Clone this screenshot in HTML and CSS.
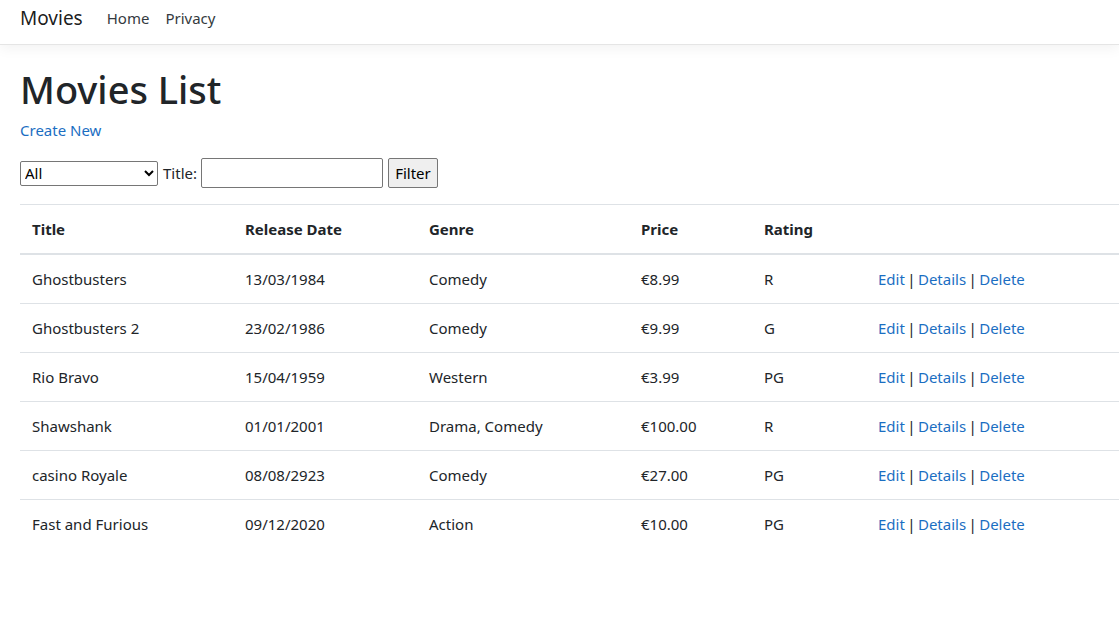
FILE: index.html
```html
<!DOCTYPE html>
<html lang="en">
<head>
<meta charset="utf-8">
<title>Movies List</title>
<link rel="stylesheet" href="styles.css">
</head>
<body>
<header class="navbar">
  <a class="brand" href="#">Movies</a>
  <nav class="nav">
    <a class="nav-link" href="#">Home</a>
    <a class="nav-link" href="#">Privacy</a>
  </nav>
</header>
<main class="container">
  <h1 class="page-title">Movies List</h1>
  <p class="create"><a href="#">Create New</a></p>
  <form class="filter">
    <select class="genre">
      <option>All</option>
    </select>
    <label class="label">Title:</label>
    <input class="title-input" type="text">
    <button type="button" class="btn">Filter</button>
  </form>
  <table class="table">
    <thead>
      <tr>
        <th class="c1">Title</th>
        <th class="c2">Release Date</th>
        <th class="c3">Genre</th>
        <th class="c4">Price</th>
        <th class="c5">Rating</th>
        <th></th>
      </tr>
    </thead>
    <tbody>
      <tr><td>Ghostbusters</td><td>13/03/1984</td><td>Comedy</td><td>€8.99</td><td>R</td><td class="actions"><a href="#">Edit</a> | <a href="#">Details</a> | <a href="#">Delete</a></td></tr>
      <tr><td>Ghostbusters 2</td><td>23/02/1986</td><td>Comedy</td><td>€9.99</td><td>G</td><td class="actions"><a href="#">Edit</a> | <a href="#">Details</a> | <a href="#">Delete</a></td></tr>
      <tr><td>Rio Bravo</td><td>15/04/1959</td><td>Western</td><td>€3.99</td><td>PG</td><td class="actions"><a href="#">Edit</a> | <a href="#">Details</a> | <a href="#">Delete</a></td></tr>
      <tr><td>Shawshank</td><td>01/01/2001</td><td>Drama, Comedy</td><td>€100.00</td><td>R</td><td class="actions"><a href="#">Edit</a> | <a href="#">Details</a> | <a href="#">Delete</a></td></tr>
      <tr><td>casino Royale</td><td>08/08/2923</td><td>Comedy</td><td>€27.00</td><td>PG</td><td class="actions"><a href="#">Edit</a> | <a href="#">Details</a> | <a href="#">Delete</a></td></tr>
      <tr><td>Fast and Furious</td><td>09/12/2020</td><td>Action</td><td>€10.00</td><td>PG</td><td class="actions"><a href="#">Edit</a> | <a href="#">Details</a> | <a href="#">Delete</a></td></tr>
    </tbody>
  </table>
</main>
</body>
</html>
```

FILE: styles.css
```css
html, body {
  margin: 0;
  padding: 0;
  overflow: hidden;
}
body {
  font-family: "Noto Sans", "Open Sans", sans-serif;
  font-size: 15px;
  line-height: 1.5;
  color: #212529;
  background: #fff;
  width: 1119px;
}
a {
  color: #1b6ec2;
  text-decoration: none;
}
.navbar {
  display: flex;
  align-items: center;
  height: 44px;
  padding: 0 20px;
  border-bottom: 1px solid #e5e5e5;
  box-shadow: 0 4px 12px rgba(0, 0, 0, 0.05);
}
.brand {
  font-size: 19px;
  color: rgba(0, 0, 0, 0.9);
  margin-right: 24px;
  margin-top: -8px;
}
.nav {
  display: flex;
  gap: 16px;
  margin-top: -8px;
}
.nav-link {
  color: #343a40;
  font-size: 15px;
}
.container {
  padding: 0 0 0 20px;
  width: 1240px;
}
.page-title {
  font-size: 38px;
  font-weight: 500;
  line-height: 1.2;
  margin: 22px 0 6px;
}
.create {
  margin: 0 0 17px;
}
.filter {
  display: flex;
  align-items: center;
  margin-bottom: 16px;
}
.genre {
  font-family: inherit;
  font-size: 15px;
  width: 138px;
  height: 25px;
  margin: 0 5px 0 0;
  border: 1px solid #767676;
  border-radius: 2px;
  background: #fff;
  color: #000;
}
.label {
  margin-right: 4px;
}
.title-input {
  font-family: inherit;
  font-size: 15px;
  width: 182px;
  height: 30px;
  box-sizing: border-box;
  border: 1px solid #767676;
  border-radius: 2px;
  margin: 0 5px 0 0;
  padding: 1px 2px;
}
.btn {
  font-family: inherit;
  font-size: 15px;
  height: 30px;
  width: 50px;
  box-sizing: border-box;
  border: 1px solid #767676;
  border-radius: 2px;
  background: #efefef;
  color: #000;
  padding: 0 6px;
}
.table {
  width: 1240px;
  border-collapse: collapse;
}
.table th,
.table td {
  text-align: left;
  padding: 12px;
  border-top: 1px solid #dee2e6;
  vertical-align: top;
  line-height: 24px;
}
.table th {
  font-weight: 700;
}
.table thead th {
  border-bottom: 2px solid #dee2e6;
}
.table tbody tr:first-child td {
  border-top: 0;
}
.actions {
  word-spacing: -1.5px;
}
.c1 { width: 189px; }
.c2 { width: 160px; }
.c3 { width: 188px; }
.c4 { width: 99px; }
.c5 { width: 90px; }
```
